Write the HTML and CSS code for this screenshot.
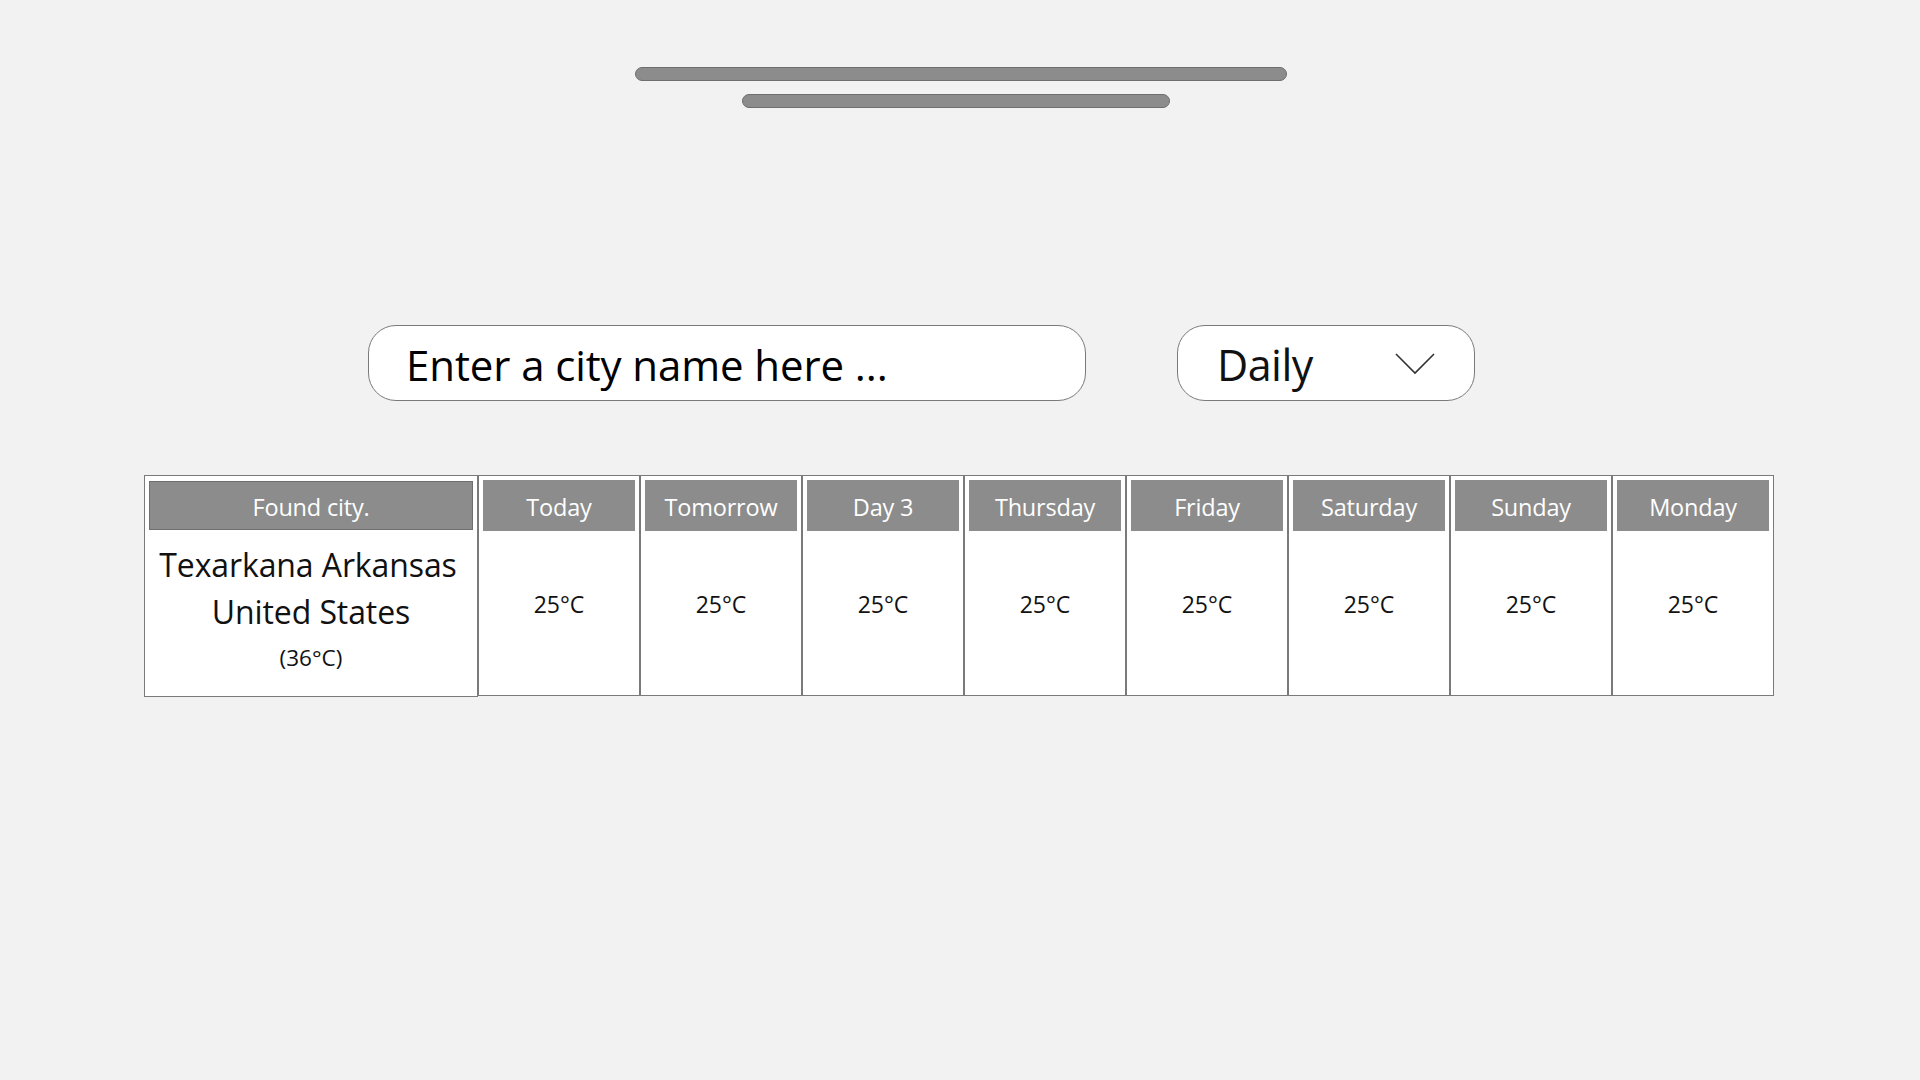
FILE: index.html
```html
<!DOCTYPE html>
<html lang="en">
<head>
<meta charset="utf-8">
<title>Weather</title>
<link rel="stylesheet" href="styles.css">
</head>
<body>
<div class="page">
  <div class="title-bars">
    <div class="bar bar-long"></div>
    <div class="bar bar-short"></div>
  </div>

  <div class="controls">
    <div class="search">Enter a city name here ...</div>
    <div class="select">
      <span class="select-label">Daily</span>
      <svg class="chevron" width="40" height="22" viewBox="0 0 40 22" aria-hidden="true">
        <polyline points="1,1 20,20 39,1" fill="none" stroke="#333" stroke-width="1.6"/>
      </svg>
    </div>
  </div>

  <div class="forecast">
    <div class="cell city-cell">
      <div class="head head-city">Found city.</div>
      <div class="city-body">
        <div class="city-name"><span class="city-line1">Texarkana Arkansas</span><br>United States</div>
        <div class="city-temp">(36°C)</div>
      </div>
    </div>
    <div class="cell"><div class="head">Today</div><div class="temp">25°C</div></div>
    <div class="cell"><div class="head">Tomorrow</div><div class="temp">25°C</div></div>
    <div class="cell"><div class="head">Day 3</div><div class="temp">25°C</div></div>
    <div class="cell"><div class="head">Thursday</div><div class="temp">25°C</div></div>
    <div class="cell"><div class="head">Friday</div><div class="temp">25°C</div></div>
    <div class="cell"><div class="head">Saturday</div><div class="temp">25°C</div></div>
    <div class="cell"><div class="head">Sunday</div><div class="temp">25°C</div></div>
    <div class="cell"><div class="head">Monday</div><div class="temp">25°C</div></div>
  </div>
</div>
</body>
</html>
```

FILE: styles.css
```css
* { box-sizing: border-box; }

html, body {
  margin: 0;
  padding: 0;
  background: #f2f2f2;
}

body {
  font-family: "Open Sans", "Noto Sans", sans-serif;
  color: #000;
  width: 1920px;
  height: 1080px;
  overflow: hidden;
}

.page {
  padding-top: 67px;
}

.title-bars {
  display: flex;
  flex-direction: column;
  align-items: center;
  gap: 13px;
}

.bar {
  height: 14px;
  background: #8c8c8c;
  border: 1px solid #6f6f6f;
  border-radius: 7px;
}

.bar-long {
  width: 652px;
  margin-left: 1px;
}

.bar-short {
  width: 428px;
  margin-right: 9px;
}

.controls {
  display: flex;
  align-items: center;
  gap: 91px;
  margin-top: 217px;
  padding-left: 368px;
}

.search {
  width: 718px;
  height: 76px;
  background: #fff;
  border: 1px solid #7a7a7a;
  border-radius: 28px;
  padding-left: 37px;
  padding-top: 2px;
  display: flex;
  align-items: center;
  font-size: 42px;
  letter-spacing: -0.1px;
  color: #000;
}

.select {
  width: 298px;
  height: 76px;
  background: #fff;
  border: 1px solid #7a7a7a;
  border-radius: 28px;
  display: flex;
  align-items: center;
  justify-content: space-between;
  padding-left: 39px;
  padding-right: 39px;
  padding-top: 2px;
}

.select-label {
  font-size: 43px;
  letter-spacing: -0.5px;
  color: #111;
}

.chevron {
  display: block;
}

.forecast {
  display: flex;
  margin-top: 74px;
  padding-left: 144px;
}

.cell {
  width: 162px;
  height: 221px;
  background: #fff;
  border: 1px solid #7a7a7a;
  padding: 4px;
  display: flex;
  flex-direction: column;
}

.city-cell {
  width: 334px;
  height: 222px;
  padding: 5px 4px 4px 4px;
}

.head {
  height: 51px;
  background: #8c8c8c;
  color: #fff;
  font-size: 23.5px;
  letter-spacing: -0.2px;
  display: flex;
  align-items: center;
  justify-content: center;
  padding-top: 2px;
}

.head-city {
  height: 49px;
  border: 1px solid #6f6f6f;
}

.temp {
  margin-top: 57px;
  text-align: center;
  font-size: 23px;
  line-height: 32px;
  letter-spacing: 0;
  color: #111;
}

.city-body {
  text-align: center;
  padding-top: 11px;
}

.city-name {
  font-size: 32px;
  line-height: 47px;
  letter-spacing: -0.1px;
  color: #111;
}

.city-line1 {
  padding-right: 6px;
}

.city-temp {
  font-size: 22.5px;
  line-height: 30px;
  margin-top: 8px;
  color: #111;
}
```
